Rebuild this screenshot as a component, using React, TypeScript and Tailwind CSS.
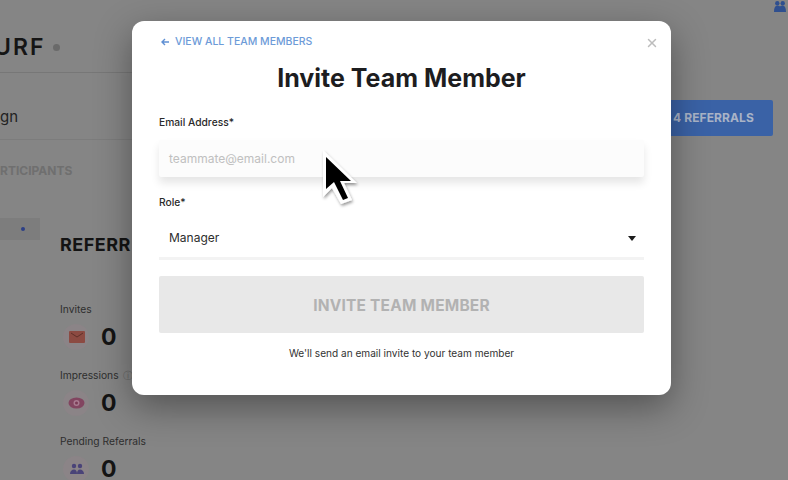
import { X } from "lucide-react";

const font = { fontFamily: "Inter, 'Liberation Sans', sans-serif" };

function Stat({ label, icon, suffix }: { label: string; icon: React.ReactNode; suffix?: boolean }) {
  return (
    <div className="flex flex-col">
      <div className="flex h-[18px] items-center gap-1 text-[10.25px] leading-none text-[#2e2e2e]">
        {label}
        {suffix && <span className="text-[10px] text-[#666]">ⓘ</span>}
      </div>
      <div className="mt-[4px] flex h-[30px] items-center">
        <div className="ml-[3px] flex h-[26px] w-[26px] items-center justify-center rounded-full bg-[#8b8487] pl-[1px]">{icon}</div>
        <span className="ml-[12px] text-[23px] font-bold leading-none text-[#141414]">0</span>
      </div>
    </div>
  );
}

function Background() {
  return (
    <div className="flex w-[671px] flex-col bg-[#858585]">
      <div className="flex h-[73px] items-center border-b border-[#777] pt-[22px]">
        <span className="-ml-[6px] text-[23px] font-semibold leading-none tracking-[2px] text-[#151515]">URF</span>
        <span className="ml-[8px] h-[7px] w-[7px] rounded-full bg-[#6a6a6a]" />
      </div>
      <div className="flex h-[67px] items-center border-b border-[#7c7c7c] pt-[21px]">
        <span className="text-[15px] leading-none text-[#222]">gn</span>
      </div>
      <div className="flex h-[62px] items-center">
        <span className="text-[12px] font-bold leading-none text-[#6f6f6f]">RTICIPANTS</span>
      </div>
      <div className="flex h-[58px] items-start">
        <div className="mt-[16px] flex h-[22px] w-[40px] items-center justify-end bg-[#7d7d7d] pr-[15px]">
          <span className="h-[4px] w-[4px] rounded-full bg-[#2c3f86]" />
        </div>
        <span className="ml-[20px] mt-[34px] text-[18px] font-bold leading-none tracking-[0.5px] text-[#141414]">REFERR</span>
      </div>
      <div className="flex flex-col gap-[14px] pl-[60px] pt-[40px]">
        <Stat
          label="Invites"
          icon={
            <svg width="16" height="14" viewBox="0 0 16 14">
              <rect y="1" width="16" height="12" rx="1" fill="#8c4a42" />
              <path d="M2 3l6 4 6-4" fill="none" stroke="#5f3029" strokeWidth="1" />
            </svg>
          }
        />
        <Stat
          label="Impressions"
          suffix
          icon={
            <svg width="17" height="12" viewBox="0 0 17 12">
              <ellipse cx="8.5" cy="6" rx="8" ry="5.5" fill="#824560" />
              <circle cx="8.5" cy="6" r="3" fill="#a87a90" />
              <circle cx="8.5" cy="6" r="1.5" fill="#7a3a55" />
            </svg>
          }
        />
        <Stat
          label="Pending Referrals"
          icon={
            <svg width="16" height="12" viewBox="0 0 16 12">
              <circle cx="5" cy="3" r="2.2" fill="#4a4378" />
              <circle cx="11" cy="3" r="2.2" fill="#4a4378" />
              <path d="M1 11c0-3 2-4.500 4-4.500S8 8 8 11zM8 11c0-3 1-4.500 3-4.500s4 1.500 4 4.500z" fill="#4a4378" />
            </svg>
          }
        />
      </div>
    </div>
  );
}

function Modal() {
  return (
    <div className="flex h-[374px] w-[539px] flex-col rounded-[12px] bg-white pl-[27px] pr-[27px] shadow-[0_12px_36px_rgba(0,0,0,0.38)]">
      <div className="relative flex h-[40px] shrink-0 items-center pt-[2px]">
        <span className="ml-[2px] flex items-center gap-[6px] text-[10.5px] font-medium leading-none text-[#6d9bd8]">
          <svg width="8" height="8" viewBox="0 0 8 8" fill="none" stroke="#5f90d4" strokeWidth="1.4">
            <path d="M8 4H1M4 1 1 4l3 3" />
          </svg>
          VIEW ALL TEAM MEMBERS
        </span>
        <X className="absolute -right-[15px] top-[15px] h-[14px] w-[14px] text-[#bdbdbd]" strokeWidth={2.5} />
      </div>
      <h1 className="text-center text-[25px] font-bold leading-[34px] text-[#1d1d1f]">Invite Team Member</h1>
      <label className="mt-[20px] text-[10.25px] font-medium leading-[14px] text-[#2a2a2a]">Email Address*</label>
      <div className="mt-[11px] flex h-[37px] items-center rounded-[2px] bg-[#fcfcfc] px-[10px] text-[12px] text-[#c0c0c0] shadow-[0_6px_8px_rgba(0,0,0,0.10)]">
        teammate@email.com
      </div>
      <label className="mt-[18px] text-[10.25px] font-medium leading-[14px] text-[#2a2a2a]">Role*</label>
      <div className="mt-[10px] flex h-[41px] items-center justify-between border-b-[3px] border-[#f3f3f3] px-[10px] text-[12px] text-[#2d2d2d]">
        Manager
        <svg width="8" height="5" viewBox="0 0 8 5" className="-mr-[2px]">
          <path d="M0 0h8L4 5z" fill="#1c1c1c" />
        </svg>
      </div>
      <button className="mt-[16px] h-[57px] w-full shrink-0 rounded-[2px] bg-[#e8e8e8] pt-[2px] text-[15.5px] font-bold tracking-[0.2px] text-[#b2b2b2]">
        INVITE TEAM MEMBER
      </button>
      <p className="mt-[13px] text-center text-[10.1px] leading-[14px] text-[#333]">We'll send an email invite to your team member</p>
    </div>
  );
}

export default function App() {
  return (
    <div className="relative h-[480px] w-[788px] overflow-hidden bg-[#858585]" style={font}>
      <div className="flex">
        <Background />
        <div className="flex flex-1 flex-col items-start">
          <div className="flex h-[100px] w-full justify-end pr-[2px]">
            <svg width="12" height="12" viewBox="0 0 11 11">
              <circle cx="3" cy="3" r="2" fill="#2f4f8f" />
              <circle cx="8" cy="3" r="2" fill="#2f4f8f" />
              <path d="M0 11c0-4 1-6 3-6s2.500 1 2.500 1S6 5 8 5s3 2 3 6z" fill="#2f4f8f" />
            </svg>
          </div>
          <div className="flex h-[36px] w-[102px] items-center rounded-r-[2px] bg-[#3a62a6] pl-[2px] text-[12px] font-bold tracking-[0.1px] text-[#a9b3c6]">
            4 REFERRALS
          </div>
        </div>
      </div>
      <div className="absolute left-[132px] top-[21px]">
        <Modal />
      </div>
      <svg className="absolute left-[318px] top-[146px]" width="46" height="64" viewBox="0 0 46 64">
        <defs>
          <filter id="cursor-shadow" x="-30%" y="-30%" width="160%" height="160%">
            <feDropShadow dx="1" dy="2" stdDeviation="1.5" floodOpacity="0.4" />
          </filter>
        </defs>
        <path d="M5 4 39 37H26L34 54 23 58 14 42 5 51z" fill="#fff" filter="url(#cursor-shadow)" />
        <path d="M8 11 33 35H22L30 52 25 54 16 36 8 43z" fill="#000" />
      </svg>
    </div>
  );
}
